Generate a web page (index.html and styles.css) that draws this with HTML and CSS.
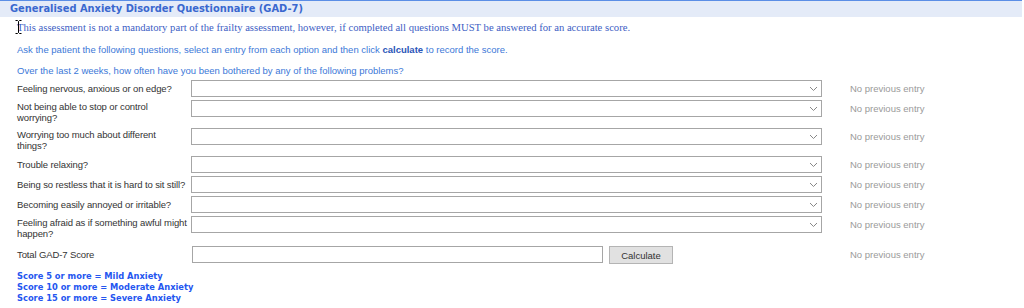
FILE: index.html
```html
<!DOCTYPE html>
<html lang="en">
<head>
  <meta charset="UTF-8">
  <title>GAD-7</title>
  <link rel="stylesheet" href="styles.css">
</head>
<body>
  <div class="panel">
    <div class="panel-title">Generalised Anxiety Disorder Questionnaire (GAD-7)</div>
    <div class="panel-body">
      <p class="notice">This assessment is not a mandatory part of the frailty assessment, however, if completed all questions MUST be answered for an accurate score.</p>
      <p class="hint">Ask the patient the following questions, select an entry from each option and then click <b>calculate</b> to record the score.</p>
      <p class="hint">Over the last 2 weeks, how often have you been bothered by any of the following problems?</p>

      <div class="questions">
        <label class="q-label">Feeling nervous, anxious or on edge?</label>
        <div class="q-field"><select></select><svg class="chev" width="9" height="6" viewBox="0 0 9 6"><path d="M1 1 L4.5 4.5 L8 1" fill="none" stroke="#888" stroke-width="1"/></svg></div>
        <div class="prev">No previous entry</div>

        <label class="q-label">Not being able to stop or control<br>worrying?</label>
        <div class="q-field"><select></select><svg class="chev" width="9" height="6" viewBox="0 0 9 6"><path d="M1 1 L4.5 4.5 L8 1" fill="none" stroke="#888" stroke-width="1"/></svg></div>
        <div class="prev">No previous entry</div>

        <label class="q-label">Worrying too much about different<br>things?</label>
        <div class="q-field"><select></select><svg class="chev" width="9" height="6" viewBox="0 0 9 6"><path d="M1 1 L4.5 4.5 L8 1" fill="none" stroke="#888" stroke-width="1"/></svg></div>
        <div class="prev">No previous entry</div>

        <label class="q-label">Trouble relaxing?</label>
        <div class="q-field"><select></select><svg class="chev" width="9" height="6" viewBox="0 0 9 6"><path d="M1 1 L4.5 4.5 L8 1" fill="none" stroke="#888" stroke-width="1"/></svg></div>
        <div class="prev">No previous entry</div>

        <label class="q-label">Being so restless that it is hard to sit still?</label>
        <div class="q-field"><select></select><svg class="chev" width="9" height="6" viewBox="0 0 9 6"><path d="M1 1 L4.5 4.5 L8 1" fill="none" stroke="#888" stroke-width="1"/></svg></div>
        <div class="prev">No previous entry</div>

        <label class="q-label">Becoming easily annoyed or irritable?</label>
        <div class="q-field"><select></select><svg class="chev" width="9" height="6" viewBox="0 0 9 6"><path d="M1 1 L4.5 4.5 L8 1" fill="none" stroke="#888" stroke-width="1"/></svg></div>
        <div class="prev">No previous entry</div>

        <label class="q-label">Feeling afraid as if something awful might<br>happen?</label>
        <div class="q-field"><select></select><svg class="chev" width="9" height="6" viewBox="0 0 9 6"><path d="M1 1 L4.5 4.5 L8 1" fill="none" stroke="#888" stroke-width="1"/></svg></div>
        <div class="prev">No previous entry</div>

        <label class="q-label total-label">Total GAD-7 Score</label>
        <div class="total-field">
          <input type="text" class="total-input">
          <button type="button" class="calc-btn">Calculate</button>
        </div>
        <div class="prev total-prev">No previous entry</div>
      </div>

      <div class="legend">
        <div>Score 5 or more = Mild Anxiety</div>
        <div>Score 10 or more = Moderate Anxiety</div>
        <div>Score 15 or more = Severe Anxiety</div>
      </div>
    </div>
  </div>

  <svg class="cursor" width="7" height="14" viewBox="0 0 7 14">
    <path d="M0.5 0.5 H2.5 L3.5 1.5 L4.5 0.5 H6.5 M3.5 1.5 V12.5 M0.5 13.5 H2.5 L3.5 12.5 L4.5 13.5 H6.5" fill="none" stroke="#000" stroke-width="1"/>
  </svg>
</body>
</html>
```

FILE: styles.css
```css
body {
  margin: 0;
  background: #fff;
  font-family: "Liberation Sans", Arial, sans-serif;
  font-size: 9.5px;
  color: #333;
  position: relative;
}
.panel {
  margin-right: 2px;
}
.panel-title {
  border-top: 1px solid #5b8ee6;
  background: #e4ebf8;
  color: #3a68cf;
  font-family: "DejaVu Sans", sans-serif;
  font-weight: bold;
  font-size: 9.9px;
  height: 16px;
  line-height: 16px;
  padding-left: 10px;
}
.panel-body {
  padding: 0 0 0 17px;
}
.notice {
  margin: 3px 0 0;
  font-family: "Liberation Serif", "Times New Roman", serif;
  font-size: 10.65px;
  line-height: 15px;
  color: #4060c4;
}
.hint {
  margin: 8px 0 0;
  line-height: 13px;
  color: #3c78d8;
}
.hint + .hint {
  margin-top: 8px;
}
.hint b {
  color: #2a55b8;
}
.questions {
  display: grid;
  grid-template-columns: 174px 631px 1fr;
  row-gap: 3px;
  margin-top: 3px;
}
.q-label {
  align-self: center;
  line-height: 11px;
  padding: 1px 0 2px 0;
  white-space: nowrap;
  letter-spacing: -0.12px;
}
.q-field {
  position: relative;
  align-self: start;
  height: 17px;
}
.q-field select {
  appearance: none;
  -webkit-appearance: none;
  display: block;
  width: 631px;
  height: 17px;
  margin: 0;
  border: 1px solid #a6a6a6;
  border-radius: 0;
  background: #fff;
  box-sizing: border-box;
}
.chev {
  position: absolute;
  right: 4px;
  top: 6px;
}
.prev {
  align-self: start;
  line-height: 17px;
  padding-left: 28px;
  color: #9a9a9a;
}
.total-label {
  margin-top: 2px;
}
.total-field {
  display: flex;
  align-items: flex-start;
  gap: 6px;
  margin-top: 2px;
  padding-left: 1px;
}
.total-input {
  width: 411px;
  height: 17px;
  margin: 0;
  border: 1px solid #a6a6a6;
  box-sizing: border-box;
}
.calc-btn {
  width: 64px;
  height: 18px;
  padding: 0;
  background: #e1e1e1;
  border: 1px solid #b4b4b4;
  border-radius: 0;
  font-family: "Liberation Sans", Arial, sans-serif;
  font-size: 9.5px;
  color: #333;
}
.total-prev {
  margin-top: 2px;
}
.legend {
  margin-top: 7px;
  font-family: "DejaVu Sans", sans-serif;
  font-weight: bold;
  font-size: 8.3px;
  line-height: 11px;
  color: #2456f0;
}
.cursor {
  position: absolute;
  left: 15px;
  top: 20px;
}
```
